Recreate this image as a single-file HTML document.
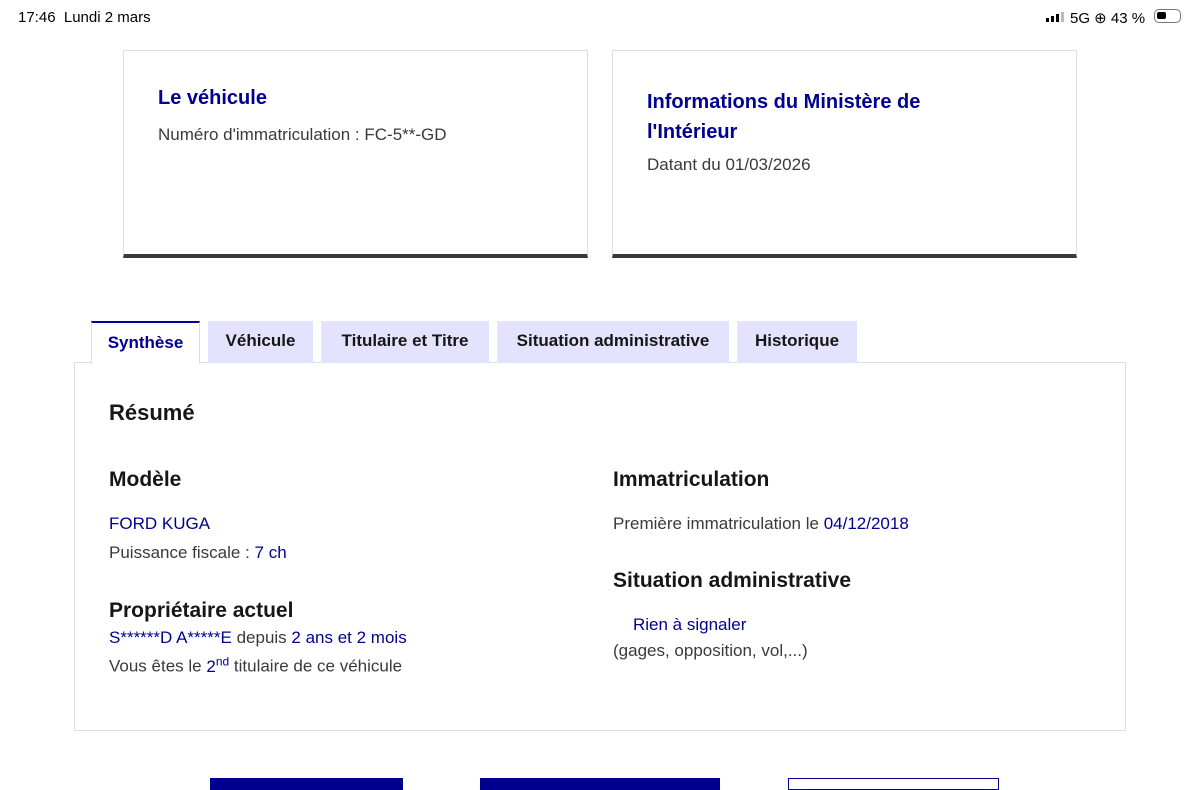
<!DOCTYPE html>
<html><head><meta charset="utf-8"><style>
*{margin:0;padding:0;box-sizing:border-box}
body{width:1200px;height:788px;overflow:hidden;background:#fff;font-family:"Liberation Sans",sans-serif;color:#3a3a3a;position:relative}
.a{position:absolute;white-space:nowrap}
.blue{color:#000091}
.card{position:absolute;top:50px;height:208px;border:1px solid #ddd;border-bottom:4px solid #3a3a3a;background:#fff}
.h{font-weight:bold;color:#000091;font-size:20px}
.tab{position:absolute;top:321px;height:42px;background:#e3e3fd;font-weight:bold;font-size:17px;color:#161616;text-align:center;line-height:40px}
.t{font-size:17px}
.h2{font-size:21px;font-weight:bold;color:#161616}
</style></head><body>
<div class="a" style="left:18px;top:9px;font-size:15px;color:#000">17:46&nbsp;&nbsp;Lundi 2 mars</div>
<div class="a" style="left:1046px;top:18px;width:3px;height:4px;background:#000"></div>
<div class="a" style="left:1051px;top:16px;width:3px;height:6px;background:#000"></div>
<div class="a" style="left:1056px;top:14px;width:3px;height:8px;background:#000"></div>
<div class="a" style="left:1061px;top:12px;width:3px;height:10px;background:#bbb"></div>
<div class="a" style="left:1070px;top:9px;font-size:15px;color:#000">5G ⊕ 43 %</div>
<div class="a" style="left:1154px;top:9px;width:27px;height:14px;border:1.5px solid #777;border-radius:5px"><div style="margin:2px;width:9px;height:7px;background:#000;border-radius:2px"></div></div>

<div class="card" style="left:123px;width:465px">
<div class="a h" style="left:34px;top:36px">Le véhicule</div>
<div class="a t" style="left:34px;top:74px">Numéro d'immatriculation : FC-5**-GD</div>
</div>
<div class="card" style="left:612px;width:465px">
<div class="a h" style="left:34px;top:36px;line-height:30px;white-space:normal;width:330px">Informations du Ministère de l'Intérieur</div>
<div class="a t" style="left:34px;top:104px">Datant du 01/03/2026</div>
</div>

<div class="a" style="left:74px;top:362px;width:1052px;height:369px;border:1px solid #ddd"></div>
<div class="tab" style="left:91px;width:109px;background:#fff;color:#000091;border-top:2px solid #000091;border-left:1px solid #ddd;border-right:1px solid #ddd;height:43px">Synthèse</div>
<div class="tab" style="left:208px;width:105px">Véhicule</div>
<div class="tab" style="left:321px;width:168px">Titulaire et Titre</div>
<div class="tab" style="left:497px;width:232px">Situation administrative</div>
<div class="tab" style="left:737px;width:120px">Historique</div>

<div class="a h2" style="left:109px;top:400px;font-size:22px">Résumé</div>
<div class="a h2" style="left:109px;top:468px">Modèle</div>
<div class="a t blue" style="left:109px;top:514px">FORD KUGA</div>
<div class="a t" style="left:109px;top:543px">Puissance fiscale : <span class="blue">7 ch</span></div>
<div class="a h2" style="left:109px;top:599px">Propriétaire actuel</div>
<div class="a t" style="left:109px;top:628px"><span class="blue">S******D A*****E</span> depuis <span class="blue">2 ans et 2 mois</span></div>
<div class="a t" style="left:109px;top:654px">Vous êtes le <span class="blue">2<sup style="font-size:12px">nd</sup></span> titulaire de ce véhicule</div>

<div class="a h2" style="left:613px;top:468px">Immatriculation</div>
<div class="a t" style="left:613px;top:514px">Première immatriculation le <span class="blue">04/12/2018</span></div>
<div class="a h2" style="left:613px;top:569px">Situation administrative</div>
<div class="a t blue" style="left:633px;top:615px">Rien à signaler</div>
<div class="a t" style="left:613px;top:641px">(gages, opposition, vol,...)</div>

<div class="a" style="left:210px;top:778px;width:193px;height:12px;background:#000091"></div>
<div class="a" style="left:480px;top:778px;width:240px;height:12px;background:#000091"></div>
<div class="a" style="left:788px;top:778px;width:211px;height:12px;border:1px solid #000091"></div>
</body></html>
